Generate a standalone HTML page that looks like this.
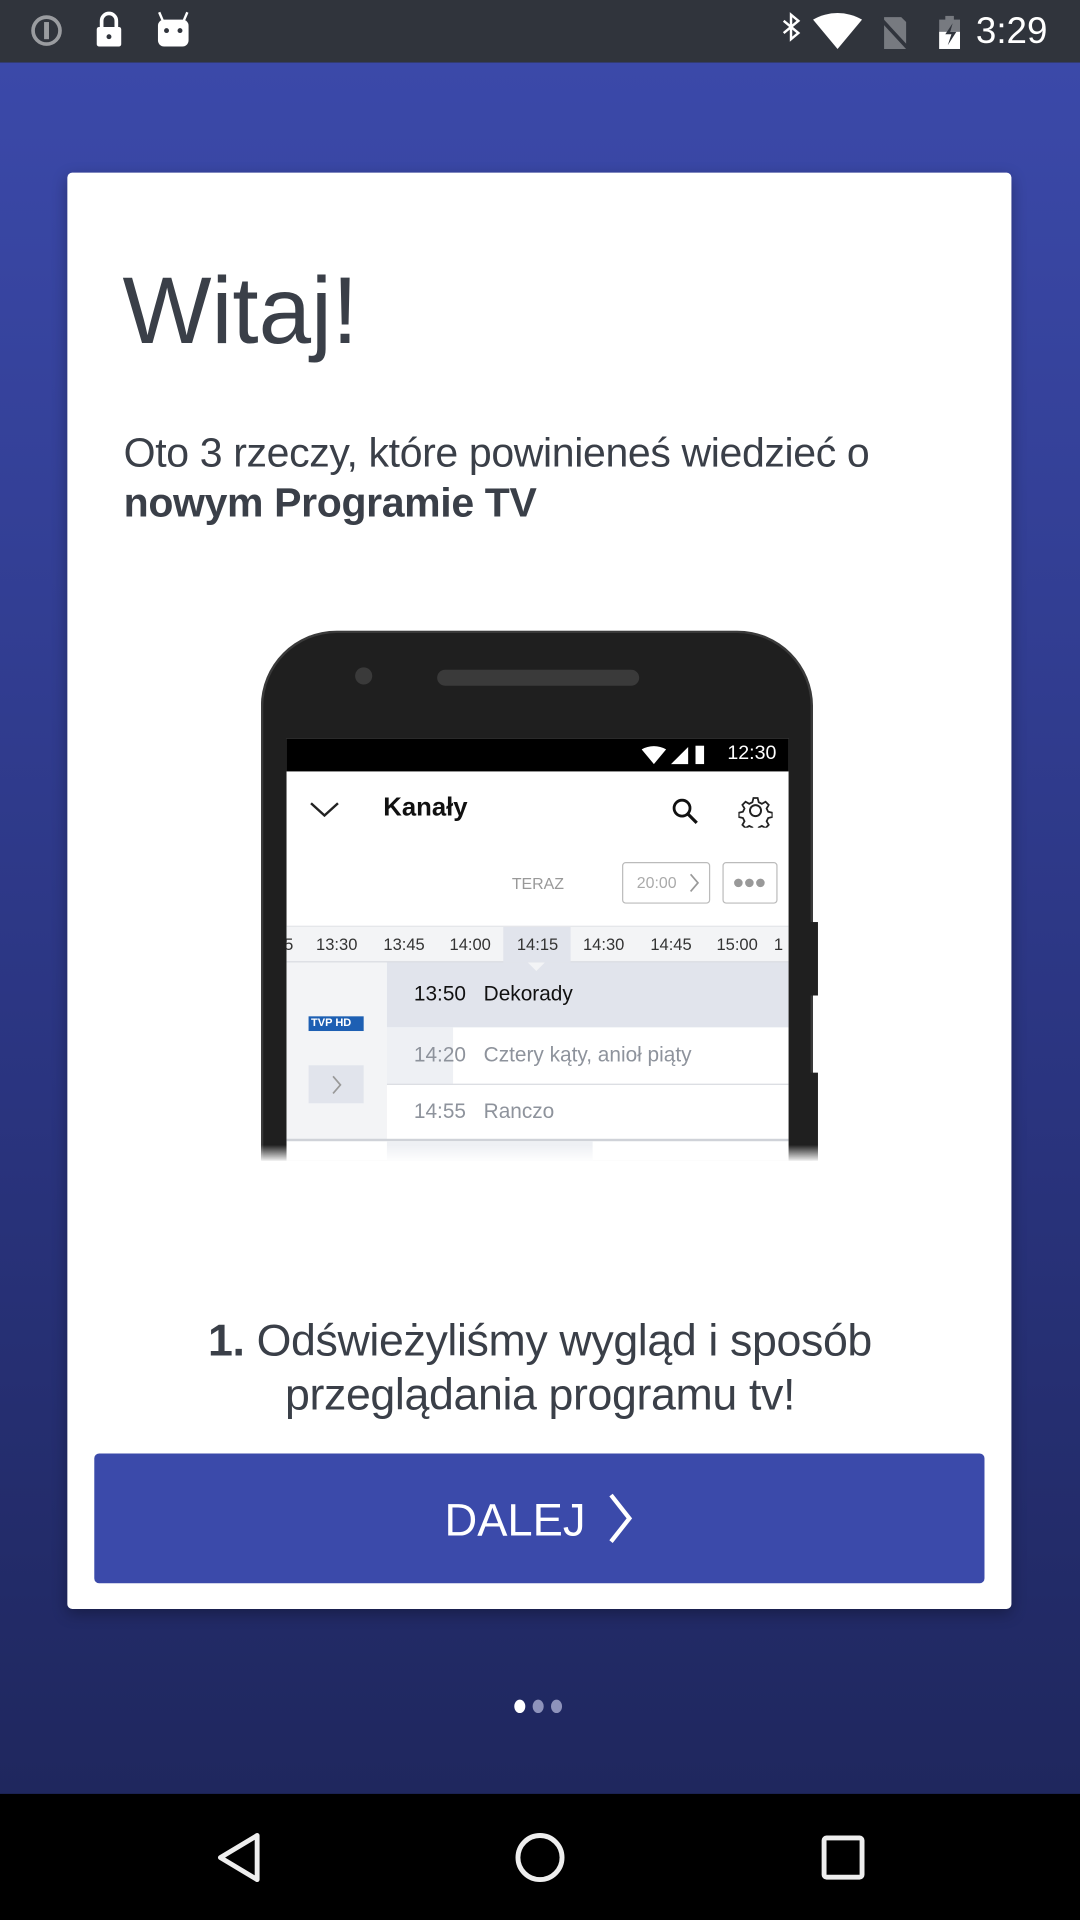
<!DOCTYPE html>
<html><head><meta charset="utf-8"><style>
*{margin:0;padding:0;box-sizing:border-box}
html,body{width:1080px;height:1920px;overflow:hidden;background:#000;font-family:"Liberation Sans",sans-serif}
#s{position:absolute;left:0;top:0;width:882px;height:1568px;transform:scale(1.2244898);transform-origin:0 0;overflow:hidden}
.a{position:absolute}
.t{position:absolute;white-space:nowrap}
.tm{position:absolute;top:161px;font-size:13.5px;color:#333;width:50px;text-align:center}
</style></head><body><div id="s">
<div class="a" style="left:0;top:51px;width:882px;height:1414px;background:linear-gradient(#3b49a9,#2a347f 60%,#1f275e)"></div>
<div class="a" style="left:0;top:0;width:882px;height:51px;background:#30343c"></div>
<svg class="a" style="left:0;top:0" width="882" height="51">
<circle cx="38" cy="25" r="11" fill="none" stroke="#9a9ca0" stroke-width="3"/><rect x="36" y="18" width="4" height="14" fill="#9a9ca0"/>
<rect x="79" y="22" width="20" height="16" rx="2" fill="#fff"/><path d="M83 22v-5a6 6 0 0 1 12 0v5" fill="none" stroke="#fff" stroke-width="3"/><circle cx="89" cy="30" r="2" fill="#30343c"/>
<rect x="129" y="16" width="25" height="22" rx="5" fill="#fff"/><path d="M133 17l-3-7M150 17l3-7" stroke="#fff" stroke-width="2"/><circle cx="136" cy="25" r="2" fill="#30343c"/><circle cx="147" cy="25" r="2" fill="#30343c"/>
<path d="M640 17l12 10-6 5V12l6 5-12 10" fill="none" stroke="#fff" stroke-width="2"/>
<path d="M664 16a40 40 0 0 1 40 0l-20 24z" fill="#fff"/>
<path d="M722 14h14l4 4v22h-18z" fill="#777a80"/><path d="M718 14l24 26" stroke="#30343c" stroke-width="3"/>
<rect x="767" y="16" width="17" height="24" fill="#777a80"/><rect x="772" y="13" width="7" height="4" fill="#777a80"/><rect x="767" y="26" width="17" height="14" fill="#fff"/><path d="M778 19l-6 9h5l-3 9 7-11h-5z" fill="#30343c"/>
</svg>
<div class="t" style="left:797px;top:9px;font-size:30px;color:#fff">3:29</div>
<div class="a" style="left:55px;top:141px;width:771px;height:1173px;background:#fff;border-radius:4px;box-shadow:0 4px 12px rgba(0,0,0,.3)"></div>
<div class="t" style="left:100px;top:210px;font-size:77px;color:#3a3f48">Witaj!</div>
<div class="t" style="left:101px;top:350px;font-size:33.5px;color:#3a3f48;line-height:41px;letter-spacing:-0.3px">Oto 3 rzeczy, które powinieneś wiedzieć o<br><b>nowym Programie TV</b></div>
<div class="a" style="left:213px;top:515px;width:451px;height:433px;background:#1f1f1f;border-radius:62px 62px 0 0;border:2px solid #3a3a3a;border-bottom:none"></div>
<div class="a" style="left:662px;top:753px;width:6px;height:60px;background:#222"></div>
<div class="a" style="left:662px;top:876px;width:6px;height:72px;background:#222"></div>
<div class="a" style="left:290px;top:545px;width:14px;height:14px;border-radius:50%;background:#3a3a3a"></div>
<div class="a" style="left:357px;top:547px;width:165px;height:13px;border-radius:7px;background:#3a3a3a"></div>
<div class="a" style="left:234px;top:603px;width:410px;height:345px;background:#fff;overflow:hidden">
 <div class="a" style="left:0;top:0;width:410px;height:27px;background:#000"></div>
 <svg class="a" style="left:290px;top:5px" width="70" height="18"><path d="M0 4a20 20 0 0 1 20 0l-10 12z" fill="#fff"/><path d="M24 16l14-14v14z" fill="#fff"/><rect x="44" y="1" width="7" height="15" fill="#fff"/></svg>
 <div class="t" style="left:360px;top:4px;font-size:16px;color:#fff">12:30</div>
 <svg class="a" style="left:18px;top:50px" width="26" height="16"><path d="M2 3l11 10 11-10" fill="none" stroke="#222" stroke-width="2"/></svg>
 <div class="t" style="left:79px;top:45px;font-size:21px;font-weight:bold;color:#111">Kanały</div>
 <svg class="a" style="left:314px;top:48px" width="24" height="24"><circle cx="9" cy="9" r="6.5" fill="none" stroke="#111" stroke-width="2.3"/><path d="M14 14l7 7" stroke="#111" stroke-width="2.6"/></svg>
 <svg class="a" style="left:369px;top:45px" width="28" height="28"><circle cx="14" cy="14" r="4.5" fill="none" stroke="#222" stroke-width="1.6"/><path d="M12 2h4l1 4 3 1.5 3.5-2 3 3-2 3.5 1.5 3 4 1v4l-4 1-1.5 3 2 3.5-3 3-3.5-2-3 1.5-1 4h-4l-1-4-3-1.5-3.5 2-3-3 2-3.5-1.5-3-4-1v-4l4-1 1.5-3-2-3.5 3-3 3.5 2 3-1.5z" transform="translate(2 2) scale(.86)" fill="none" stroke="#222" stroke-width="1.7"/></svg>
 <div class="t" style="left:184px;top:111px;font-size:13px;color:#999">TERAZ</div>
 <div class="a" style="left:274px;top:101px;width:72px;height:34px;border:1.5px solid #bbb;border-radius:3px"></div>
 <div class="t" style="left:286px;top:110px;font-size:13px;color:#aaa">20:00</div>
 <svg class="a" style="left:328px;top:110px" width="10" height="16"><path d="M2 1l6 7-6 7" fill="none" stroke="#999" stroke-width="1.4"/></svg>
 <div class="a" style="left:356px;top:101px;width:45px;height:34px;border:1.5px solid #bbb;border-radius:3px"></div>
 <svg class="a" style="left:364px;top:113px" width="30" height="10"><circle cx="5" cy="5" r="3.5" fill="#999"/><circle cx="14" cy="5" r="3.5" fill="#999"/><circle cx="23" cy="5" r="3.5" fill="#999"/></svg>
 <div class="a" style="left:0;top:153px;width:410px;height:30px;background:#f3f4f6;border-top:1px solid #e4e6ea;border-bottom:1px solid #d8dbe0"></div>
 <div class="a" style="left:177px;top:154px;width:55px;height:29px;background:#e1e4ec"></div>
 <div class="tm" style="left:-27px">15</div>
 <div class="tm" style="left:16px">13:30</div>
 <div class="tm" style="left:71px">13:45</div>
 <div class="tm" style="left:125px">14:00</div>
 <div class="tm" style="left:180px">14:15</div>
 <div class="tm" style="left:234px">14:30</div>
 <div class="tm" style="left:289px">14:45</div>
 <div class="tm" style="left:343px">15:00</div>
 <div class="tm" style="left:398px;text-align:left;width:20px">1</div>
 <div class="a" style="left:0;top:183px;width:82px;height:145px;background:#f3f4f6"></div>
 <div class="a" style="left:82px;top:183px;width:328px;height:53px;background:#e1e4ec"></div>
 <div class="a" style="left:197px;top:183px;width:0;height:0;border:7px solid transparent;border-top-color:#f3f4f6"></div>
 <div class="a" style="left:82px;top:236px;width:54px;height:46px;background:#eef0f4"></div>
 <div class="a" style="left:82px;top:282px;width:328px;height:1px;background:#d8dbe0"></div>
 <div class="a" style="left:0;top:327px;width:410px;height:1.5px;background:#cfd2d8"></div>
 <div class="a" style="left:82px;top:329px;width:168px;height:16px;background:#eef0f4"></div>
 <div class="t" style="left:104px;top:199px;font-size:17px;color:#111">13:50</div><div class="t" style="left:161px;top:199px;font-size:17px;color:#111">Dekorady</div>
 <div class="t" style="left:104px;top:249px;font-size:17px;color:#8e939c">14:20</div><div class="t" style="left:161px;top:249px;font-size:17px;color:#8e939c">Cztery kąty, anioł piąty</div>
 <div class="t" style="left:104px;top:295px;font-size:17px;color:#8e939c">14:55</div><div class="t" style="left:161px;top:295px;font-size:17px;color:#8e939c">Ranczo</div>
 <div class="a" style="left:18px;top:227px;width:45px;height:12px;background:#1d5fb3"></div>
 <div class="t" style="left:20px;top:227px;font-size:9px;font-weight:bold;color:#fff">TVP HD</div>
 <div class="a" style="left:18px;top:267px;width:45px;height:31px;background:#e1e4ec"></div>
 <svg class="a" style="left:36px;top:275px" width="10" height="16"><path d="M2 1l6 7-6 7" fill="none" stroke="#999" stroke-width="1.4"/></svg>
</div>
<div class="a" style="left:210px;top:935px;width:462px;height:14px;background:linear-gradient(rgba(255,255,255,0),#fff)"></div>
<div class="t" style="left:0;top:1073px;width:882px;text-align:center;font-size:36.5px;color:#3a3f48;line-height:44px;letter-spacing:-0.3px"><b>1.</b> Odświeżyliśmy wygląd i sposób<br>przeglądania programu tv!</div>
<div class="a" style="left:77px;top:1187px;width:727px;height:106px;background:#3b4aaa;border-radius:4px"></div>
<div class="t" style="left:363px;top:1221px;font-size:37px;color:#fff">DALEJ</div>
<svg class="a" style="left:494px;top:1218px" width="26" height="44"><path d="M5 3l15 19L5 41" fill="none" stroke="#fff" stroke-width="3.5"/></svg>
<div class="a" style="left:420px;top:1388px;width:9px;height:11px;border-radius:50%;background:#fff"></div>
<div class="a" style="left:435px;top:1388px;width:9px;height:11px;border-radius:50%;background:#8e93bb"></div>
<div class="a" style="left:450px;top:1388px;width:9px;height:11px;border-radius:50%;background:#8e93bb"></div>
<svg class="a" style="left:0;top:1465px" width="882" height="103">
<path d="M210 34L180 52L210 70Z" fill="none" stroke="#eee" stroke-width="4" stroke-linejoin="round"/>
<circle cx="441" cy="52" r="18" fill="none" stroke="#eee" stroke-width="4"/>
<rect x="673" y="36" width="31" height="32" rx="2" fill="none" stroke="#eee" stroke-width="4"/>
</svg>
</div></body></html>
